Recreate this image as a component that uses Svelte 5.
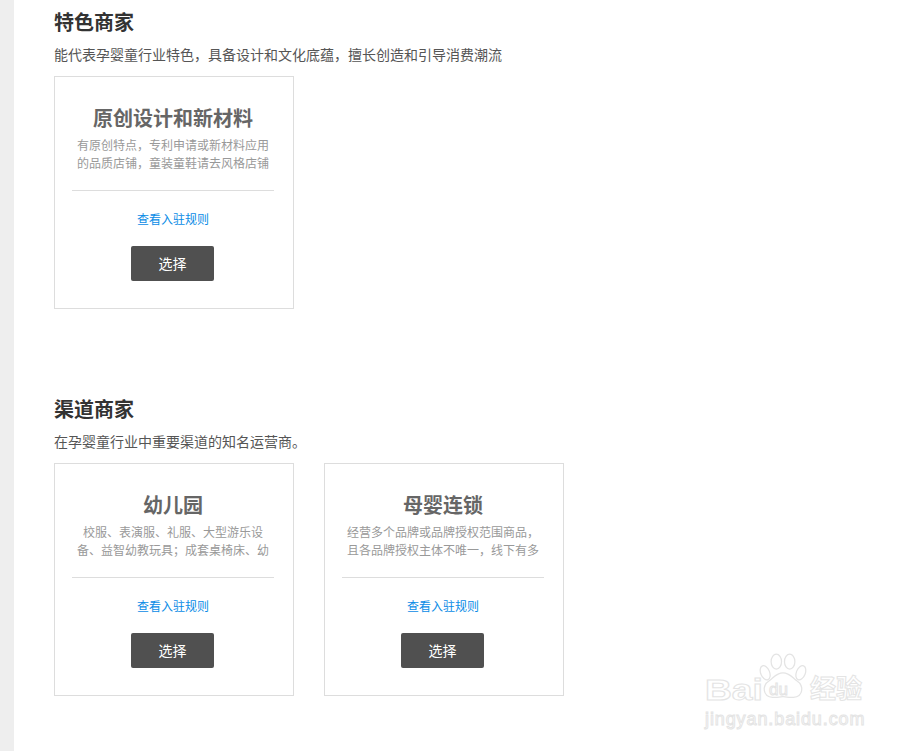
<script>
  const sections = [
    {
      title: '特色商家',
      desc: '能代表孕婴童行业特色，具备设计和文化底蕴，擅长创造和引导消费潮流',
      cards: [
        { name: '原创设计和新材料', lines: ['有原创特点，专利申请或新材料应用', '的品质店铺，童装童鞋请去风格店铺'] }
      ]
    },
    {
      title: '渠道商家',
      desc: '在孕婴童行业中重要渠道的知名运营商。',
      cards: [
        { name: '幼儿园', lines: ['校服、表演服、礼服、大型游乐设', '备、益智幼教玩具；成套桌椅床、幼'] },
        { name: '母婴连锁', lines: ['经营多个品牌或品牌授权范围商品，', '且各品牌授权主体不唯一，线下有多'] }
      ]
    }
  ];
</script>

<div class="page">
  <main>
    {#each sections as section}
      <section>
        <h2>{section.title}</h2>
        <p class="desc">{section.desc}</p>
        <div class="cards">
          {#each section.cards as card}
            <div class="card">
              <h3>{card.name}</h3>
              <div class="intro">
                {#each card.lines as line}<div>{line}</div>{/each}
              </div>
              <div class="rule"></div>
              <a href="#rules">查看入驻规则</a>
              <button>选择</button>
            </div>
          {/each}
        </div>
      </section>
    {/each}
  </main>

  <div class="mark" aria-hidden="true">
    <span class="bai">Bai</span>
    <svg width="52" height="47" viewBox="0 0 70 62" fill="#fff" stroke="#e4e4e4" stroke-width="1.7">
      <ellipse cx="11" cy="26" rx="6" ry="10" transform="rotate(-22 11 26)" />
      <ellipse cx="26" cy="11" rx="7" ry="10" />
      <ellipse cx="44" cy="11" rx="7" ry="10" />
      <ellipse cx="59" cy="26" rx="6" ry="10" transform="rotate(22 59 26)" />
      <path d="M35 26c9 0 12 6 19 11 9 6 9 21-5 22-6 1-9-1-14-1s-8 2-14 1C7 58 7 43 16 37c7-5 10-11 19-11z" />
    </svg>
    <span class="du">du</span>
    <span class="jy">经验</span>
    <span class="url">jingyan.baidu.com</span>
  </div>
</div>

<style>
  :global(body) { background: #fff; }
  .page { position: relative; height: 751px; overflow: hidden; border-left: 14px solid #eee; font-family: "Liberation Sans", "Noto Sans CJK SC", sans-serif; }
  main { padding: 11px 0 0 40px; }
  section { height: 387px; }
  h2 { margin: 0; font-size: 20px; line-height: 25px; font-weight: 700; color: #333; }
  .desc { margin: 7px 0 0; font-size: 14px; line-height: 24px; color: #555; height: 33px; }
  .cards { display: flex; gap: 30px; }
  .card { box-sizing: border-box; width: 240px; height: 233px; border: 1px solid #ddd; padding: 28px 18px 0 16px; display: flex; flex-direction: column; align-items: center; }
  h3 { margin: 0; font-size: 20px; line-height: 28px; font-weight: 700; color: #666; white-space: nowrap; }
  .intro { margin-top: 4px; height: 36px; font-size: 12px; line-height: 18px; color: #999; text-align: center; white-space: nowrap; }
  .rule { margin: 17px 0 0; border-top: 1px solid #ddd; flex: none; width: 202px; }
  a { margin-top: 20px; font-size: 12px; line-height: 18px; color: #0a8ce6; text-decoration: none; }
  button { margin: 17px 1px 0 0; width: 83px; height: 35px; padding: 0 0 2px; border: 0; border-radius: 2px; background: #505050; color: #fff; font: inherit; font-size: 14px; }
  .mark { position: absolute; left: 689px; top: 650px; width: 170px; height: 80px; }
  .mark svg { position: absolute; left: 54px; top: 3px; }
  .mark span { position: absolute; white-space: nowrap; color: #fff; -webkit-text-stroke: 1px #e4e4e4; }
  .bai { left: 2px; top: 26px; font-size: 29px; line-height: 28px; font-weight: 700; transform: scaleX(1.28); transform-origin: left; }
  .du { left: 66px; top: 30px; font-size: 17px; line-height: 20px; }
  .jy { left: 107px; top: 24px; font-size: 26px; line-height: 30px; font-weight: 700; }
  .url { left: 2px; top: 59px; font-size: 18px; line-height: 20px; letter-spacing: .9px; }
</style>
